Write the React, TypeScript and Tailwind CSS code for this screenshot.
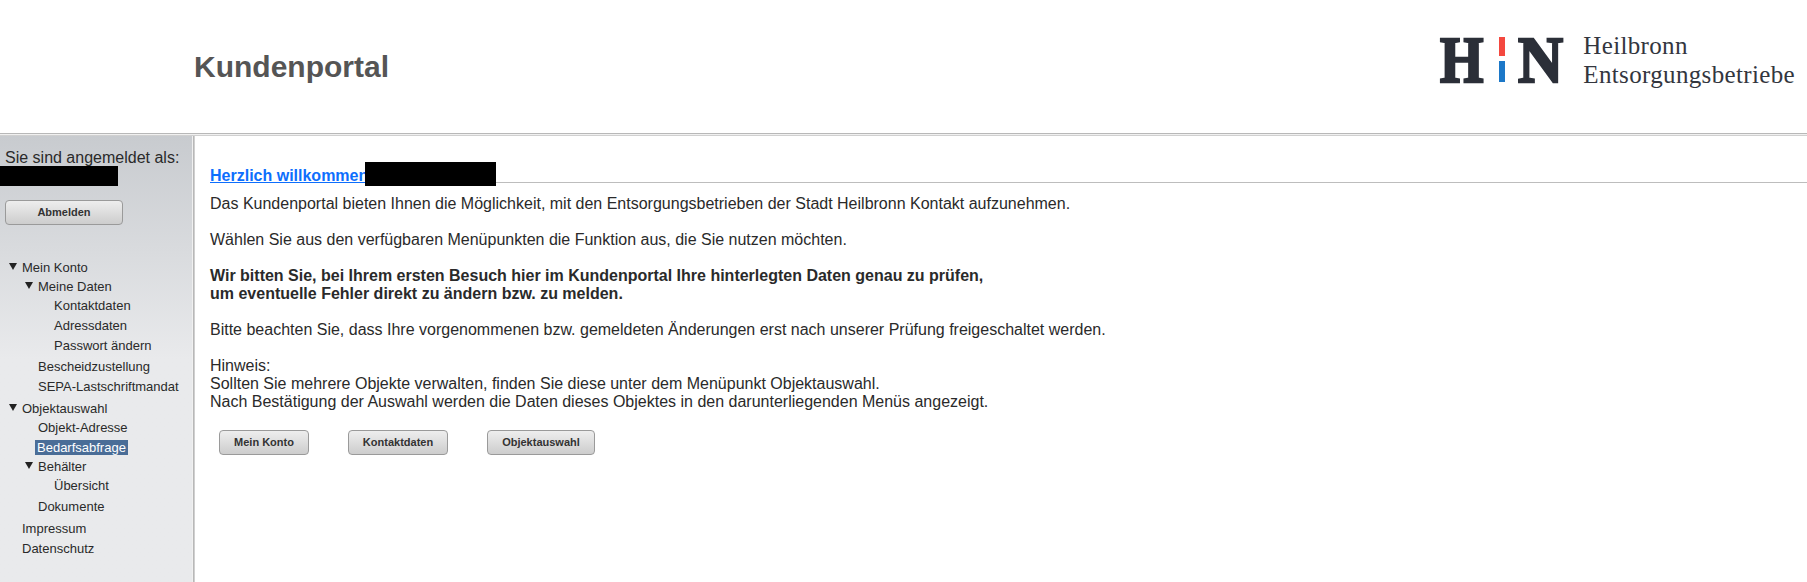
const sans = { fontFamily: '"Liberation Sans", Arial, sans-serif' };

function Btn({ label, className }: { label: string; className: string }) {
  return (
    <button
      className={`h-[25px] rounded-[4px] border border-[#9a9a9a] bg-gradient-to-b from-[#eeeeee] to-[#cdcdcd] text-[11px] font-bold leading-none text-[#333] ${className}`}
    >
      {label}
    </button>
  );
}

function Item({ label, level, open, active, className = "" }: { label: string; level: number; open?: boolean; active?: boolean; className?: string }) {
  const pl = level === 0 ? "pl-[22px]" : level === 1 ? "pl-[38px]" : "pl-[54px]";
  return (
    <div className={`relative h-[19px] leading-[19px] ${pl} ${className}`}>
      {open && (
        <svg
          width="8"
          height="7"
          viewBox="0 0 8 7"
          className={`absolute top-[5px] ${level === 0 ? "left-[9px]" : "left-[25px]"}`}
        >
          <path d="M0 0H8L4 7Z" fill="#222" />
        </svg>
      )}
      {active ? <span className="-ml-[3px] inline-block h-[15px] bg-[#4a6d97] px-[2px] leading-[15px] text-white">{label}</span> : label}
    </div>
  );
}

function Logo() {
  return (
    <div className="flex items-start">
      <svg width="124" height="46" viewBox="0 0 124 46" className="overflow-visible">
        <g fill="#2b2f38" stroke="#2b2f38" strokeWidth="2.4" fontFamily='"Liberation Serif", serif' fontWeight="700" fontSize="65">
          <text transform="translate(0 44.5) scale(0.86 1)">H</text>
          <text transform="translate(78 44.5) scale(0.96 1)">N</text>
        </g>
        <rect x="59" y="0" width="6" height="19" fill="#f4483f" />
        <rect x="59" y="24" width="6" height="21" fill="#1c78c8" />
      </svg>
      <div className="ml-[19px] mt-[-6px] text-[25px] leading-[29px] tracking-[0.35px] text-[#33363e]" style={{ fontFamily: '"Liberation Serif", serif' }}>
        <div>Heilbronn</div>
        <div>Entsorgungsbetriebe</div>
      </div>
    </div>
  );
}

export default function App() {
  return (
    <div className="flex h-[582px] w-[1807px] flex-col overflow-hidden bg-white text-[#2a2a2a]" style={sans}>
      <header className="flex h-[133px] items-start justify-between">
        <h1 className="ml-[194px] mt-[50px] text-[30px] font-bold leading-[34px] text-[#555]">Kundenportal</h1>
        <div className="mr-[12px] mt-[37px]">
          <Logo />
        </div>
      </header>
      <div className="h-px bg-[#b8b8b8]" />
      <div className="h-px bg-[#f0f0f0]" />
      <div className="h-px bg-[#d0d0d0]" />
      <div className="flex min-h-0 flex-1">
        <aside className="h-full w-[192px] shrink-0 bg-gradient-to-b from-[#c8cbcf] via-[#e9eaec] via-[50%] to-[#e9eaec] pt-[13px] text-[13px] text-[#2a2a2a]">
          <div className="pl-[5px] text-[16px] leading-[17px]">Sie sind angemeldet als:</div>
          <div className="h-[20px] w-[118px] bg-black" />
          <Btn label="Abmelden" className="ml-[5px] mt-[14px] w-[118px]" />
          <div className="mt-[33px]">
            <Item label="Mein Konto" level={0} open />
            <Item label="Meine Daten" level={1} open />
            <Item label="Kontaktdaten" level={2} />
            <Item label="Adressdaten" level={2} className="mt-px" />
            <Item label="Passwort ändern" level={2} className="mt-px" />
            <Item label="Bescheidzustellung" level={1} className="mt-[2px]" />
            <Item label="SEPA-Lastschriftmandat" level={1} className="mt-px" />
            <Item label="Objektauswahl" level={0} open className="mt-[3px]" />
            <Item label="Objekt-Adresse" level={1} />
            <Item label="Bedarfsabfrage" level={1} active className="mt-px" />
            <Item label="Behälter" level={1} open />
            <Item label="Übersicht" level={2} />
            <Item label="Dokumente" level={1} className="mt-[2px]" />
            <Item label="Impressum" level={0} className="mt-[3px]" />
            <Item label="Datenschutz" level={0} className="mt-px" />
          </div>
        </aside>
        <div className="w-px shrink-0 bg-[#f0f0f0]" />
        <div className="w-px shrink-0 bg-[#b8b8b8]" />
        <div className="w-px shrink-0 bg-[#d0d0d0]" />
        <main className="min-w-0 flex-1 pl-[15px] pt-[26px] text-[16px] leading-[18px] text-[#2a2a2a]">
          <div className="flex h-[21px] items-start border-b border-[#bdbdbd]">
            <a className="mt-[5px] font-bold text-[#0d6efd] underline">Herzlich willkommen</a>
            <span className="-ml-[3px] h-[24px] w-[131px] shrink-0 bg-black" />
          </div>
          <p className="mt-[12px]">Das Kundenportal bieten Ihnen die Möglichkeit, mit den Entsorgungsbetrieben der Stadt Heilbronn Kontakt aufzunehmen.</p>
          <p className="mt-[18px]">Wählen Sie aus den verfügbaren Menüpunkten die Funktion aus, die Sie nutzen möchten.</p>
          <p className="mt-[18px] font-bold">
            Wir bitten Sie, bei Ihrem ersten Besuch hier im Kundenportal Ihre hinterlegten Daten genau zu prüfen,
            <br />
            um eventuelle Fehler direkt zu ändern bzw. zu melden.
          </p>
          <p className="mt-[18px]">Bitte beachten Sie, dass Ihre vorgenommenen bzw. gemeldeten Änderungen erst nach unserer Prüfung freigeschaltet werden.</p>
          <p className="mt-[18px]">
            Hinweis:
            <br />
            Sollten Sie mehrere Objekte verwalten, finden Sie diese unter dem Menüpunkt Objektauswahl.
            <br />
            Nach Bestätigung der Auswahl werden die Daten dieses Objektes in den darunterliegenden Menüs angezeigt.
          </p>
          <div className="ml-[9px] mt-[19px] flex gap-[39px]">
            <Btn label="Mein Konto" className="w-[90px]" />
            <Btn label="Kontaktdaten" className="w-[100px]" />
            <Btn label="Objektauswahl" className="w-[108px]" />
          </div>
        </main>
      </div>
    </div>
  );
}
